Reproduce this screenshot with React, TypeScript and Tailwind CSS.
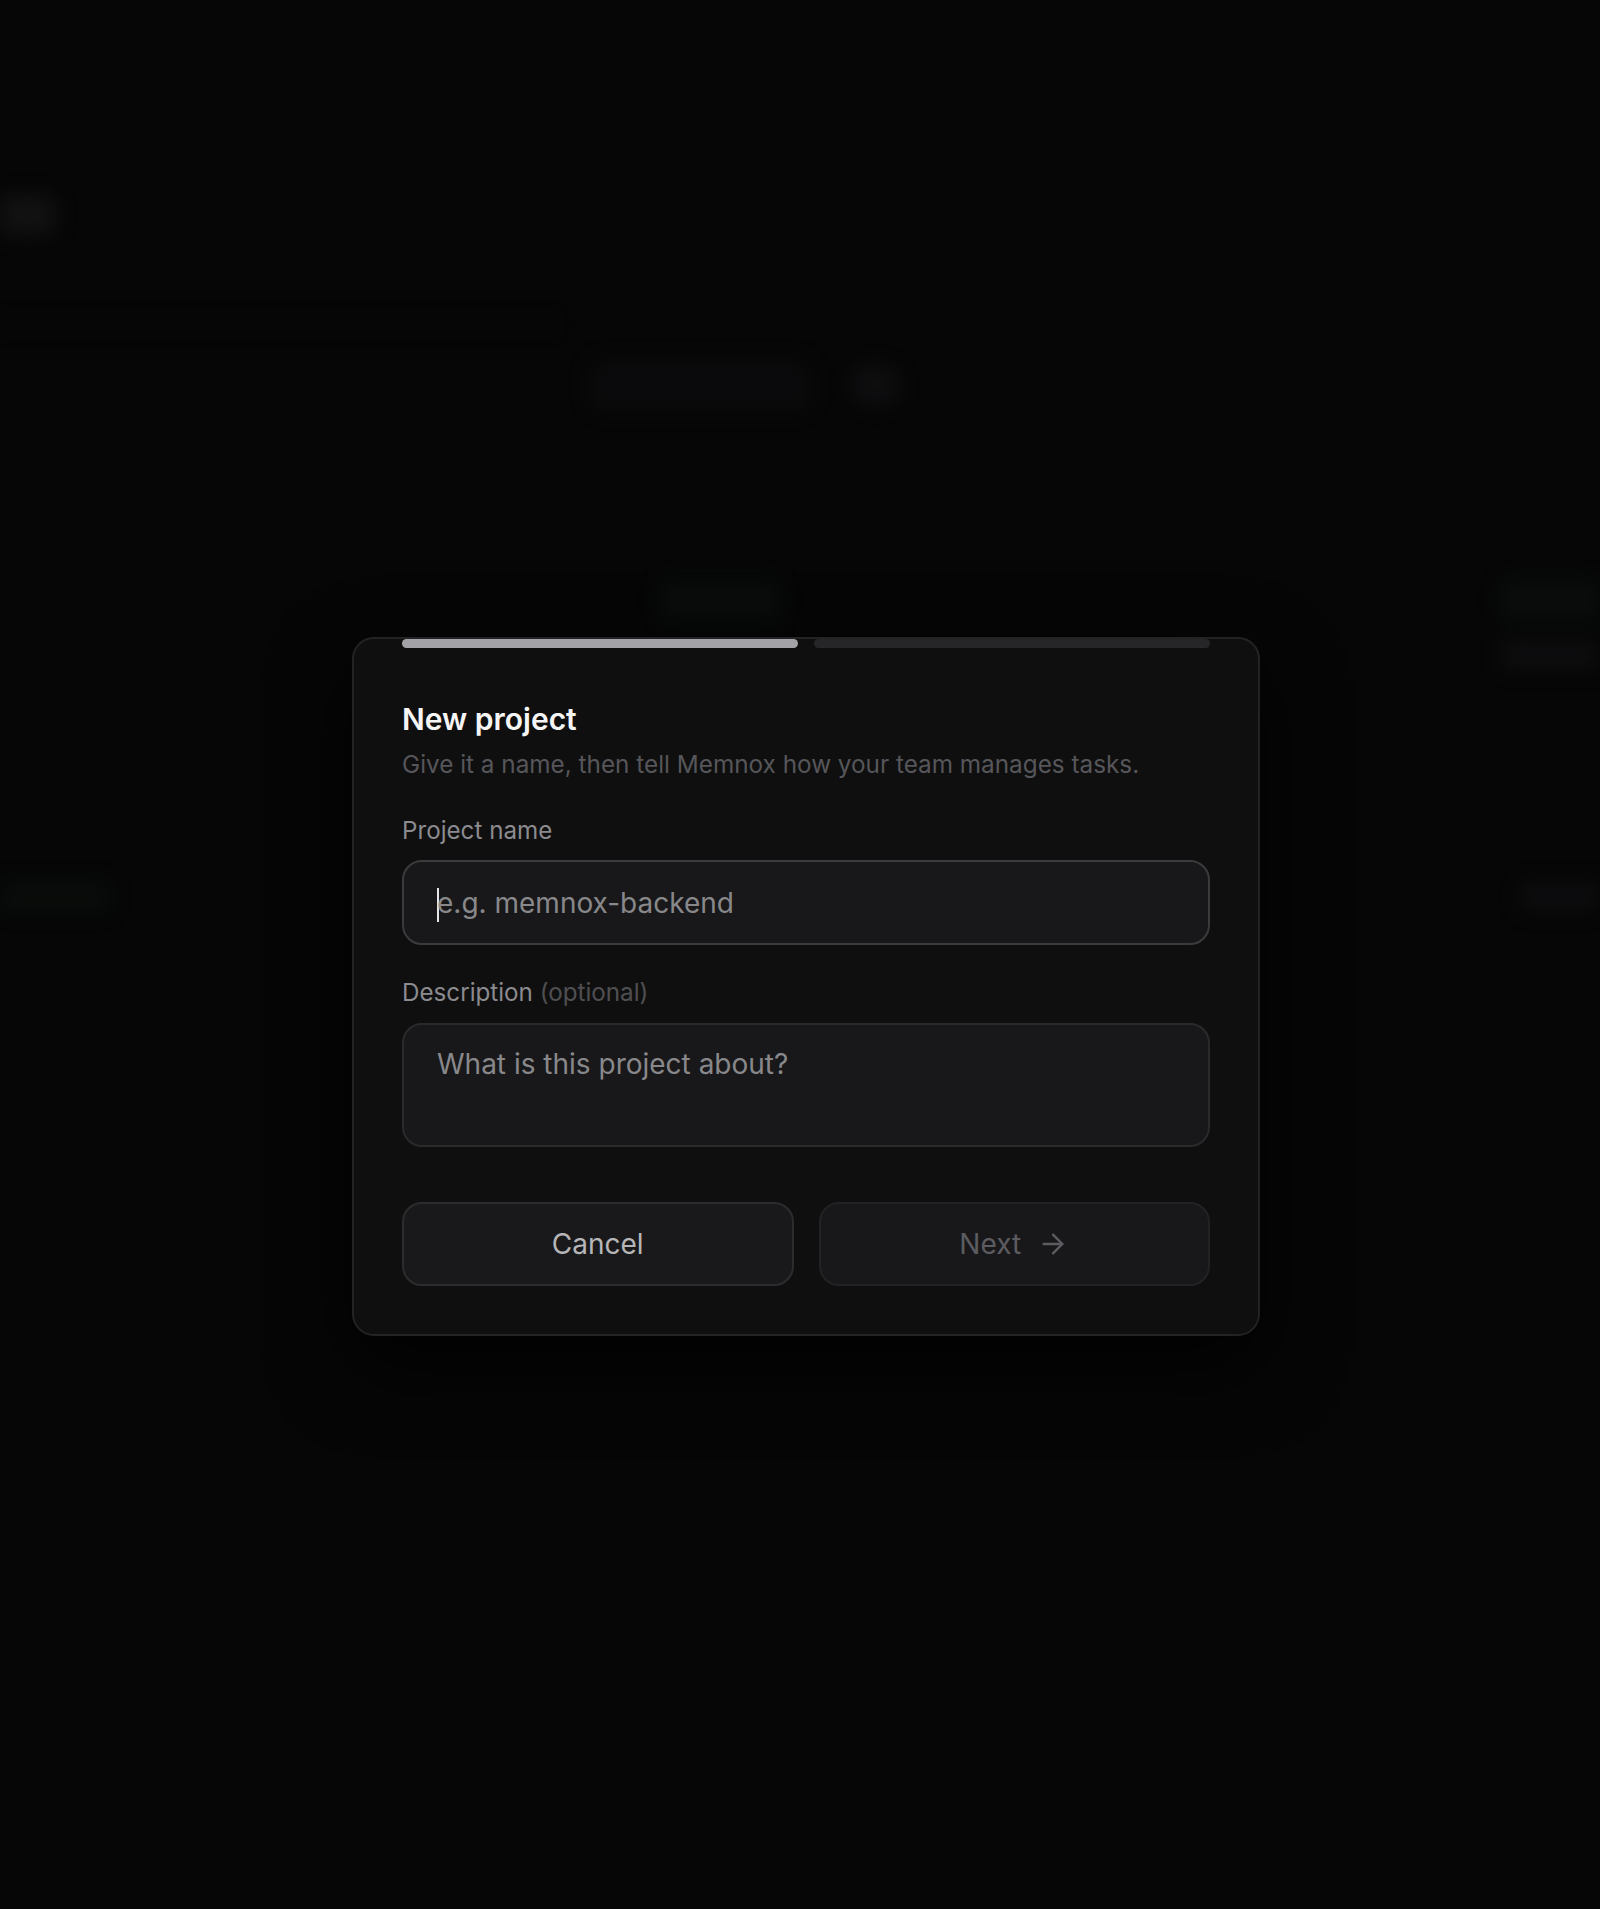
import { ArrowRight } from 'lucide-react'

function Backdrop() {
  // the page behind the dialog, blurred almost to nothing
  return (
    <div className="pointer-events-none absolute inset-0 flex flex-col blur-[10px] opacity-60">
      <div className="mt-[195px] h-[40px] w-[55px] rounded-md bg-[#1a1a1a]" />
      <div className="mt-[87px] h-[4px] w-[560px] bg-[#0d0d0e]" />
      <div className="mt-[34px] flex items-center gap-[40px] pl-[590px]">
        <div className="h-[50px] w-[220px] rounded-lg bg-[#0e0e10]" />
        <div className="h-[40px] w-[50px] rounded-full bg-[#141416]" />
      </div>
      <div className="mt-[170px] flex justify-between pl-[660px]">
        <div className="h-[40px] w-[120px] rounded-md bg-[#0c120e]" />
        <div className="flex w-[100px] flex-col gap-[20px]">
          <div className="h-[40px] rounded-md bg-[#0c120e]" />
          <div className="h-[30px] rounded-md bg-[#121214]" />
        </div>
      </div>
      <div className="mt-[212px] flex justify-between">
        <div className="h-[30px] w-[110px] rounded-md bg-[#0c110d]" />
        <div className="h-[30px] w-[80px] rounded-md bg-[#111113]" />
      </div>
    </div>
  )
}

export default function App() {
  return (
    <div
      className="relative min-h-[1909px] w-full overflow-hidden bg-[#060607]"
      style={{ fontFamily: 'Inter, "Noto Sans", sans-serif' }}
    >
      <Backdrop />

      <div className="relative flex justify-center pl-[12px] pt-[637px]">
        <div className="w-[908px] overflow-hidden rounded-[22px] border-2 border-[#232325] bg-[#0f0f10] px-[48px] pb-[48px] shadow-[0_30px_80px_rgba(0,0,0,0.8)]">
          <div className="flex gap-[16px]">
            <div className="h-[9px] flex-1 rounded-full bg-[#a3a3a7]" />
            <div className="h-[9px] flex-1 rounded-full bg-[#262628]" />
          </div>

          <h2 className="mt-[53px] text-[30px] font-semibold leading-[36px] text-[#f5f5f5]">
            New project
          </h2>
          <p className="mt-[11px] text-[24.3px] leading-[32px] text-[#56565a]">
            Give it a name, then tell Memnox how your team manages tasks.
          </p>

          <div className="mt-[35px] text-[24.2px] leading-[32px] text-[#8b8b8f]">Project name</div>
          <div className="mt-[13px] flex h-[85px] items-center rounded-[20px] border-2 border-[#3b3b3d] bg-[#18181a] px-[33px]">
            <div className="text-[28px] leading-[40px] text-[#88888b]">
              <span className="-mr-[2px] inline-block h-[34px] w-[2px] bg-[#e5e5e5] align-middle" />
              e.g. memnox-backend
            </div>
          </div>

          <div className="mt-[32px] text-[24.2px] leading-[32px] text-[#8b8b8f]">
            Description <span className="text-[#4f4f52]">(optional)</span>
          </div>
          <div className="mt-[14px] h-[124px] rounded-[20px] border-2 border-[#2a2a2c] bg-[#18181a] px-[33px] pt-[19px] text-[28px] leading-[40px] text-[#88888b]">
            What is this project about?
          </div>

          <div className="mt-[55px] flex gap-[25px]">
            <button className="flex h-[84px] flex-1 items-center justify-center rounded-[20px] border-2 border-[#2c2c2e] bg-[#19191b] text-[28px] text-[#b6b6b8]">
              Cancel
            </button>
            <button className="flex h-[84px] flex-1 items-center justify-center gap-[16px] rounded-[20px] border-2 border-[#222224] bg-[#18181b] text-[28px] text-[#5c5c60]">
              Next
              <ArrowRight size={32} strokeWidth={1.8} />
            </button>
          </div>
        </div>
      </div>
    </div>
  )
}
